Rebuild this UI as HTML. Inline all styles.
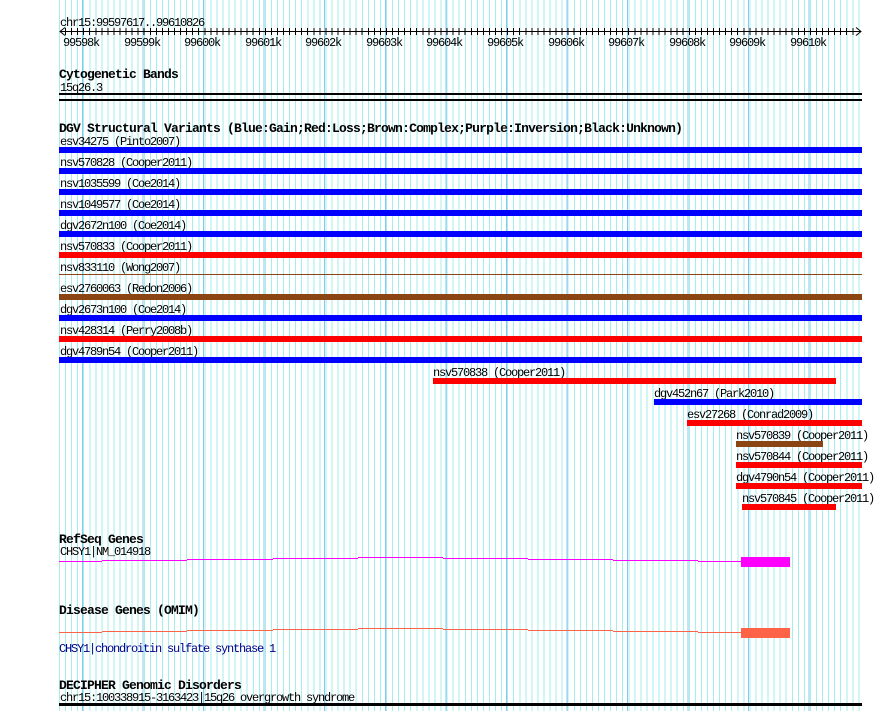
<!DOCTYPE html>
<html><head><meta charset="utf-8"><style>
html,body{margin:0;padding:0;background:#fff;}
body{width:890px;height:711px;position:relative;overflow:hidden;}
.grid{position:absolute;left:59px;top:0;width:803px;height:711px;
background-image:repeating-linear-gradient(to right,#a4eeee 0,#a4eeee 1px,transparent 1px,transparent 6.056px);}
.maj{position:absolute;left:23px;top:0;width:780px;height:711px;
background-image:repeating-linear-gradient(to right,#88c8ee 0,#88c8ee 1px,transparent 1px,transparent 60.56px);}
.t{position:absolute;font-family:"Liberation Mono",monospace;font-size:12px;line-height:12px;letter-spacing:-1.2px;color:#000;white-space:pre;}
.b{position:absolute;font-family:"Liberation Mono",monospace;font-size:13px;line-height:13px;font-weight:bold;letter-spacing:-0.8px;color:#000;white-space:pre;}
.r{position:absolute;}
</style></head><body>
<div class="grid"><div class="maj"></div></div>

<div class="t" style="left:60px;top:17px">chr15:99597617..99610826</div>
<svg class="r" style="left:0;top:0" width="890" height="40">
<line x1="60" y1="31.5" x2="861" y2="31.5" stroke="#000"/>
<polyline points="65,27.5 60,31.5 65,35.5" fill="none" stroke="#000"/>
<polyline points="856,27.5 861,31.5 856,35.5" fill="none" stroke="#000"/>
</svg>
<div class="r" style="left:65px;top:28px;width:792px;height:7px;background-image:repeating-linear-gradient(to right,#000 0,#000 1px,transparent 1px,transparent 6.056px);"></div>
<div class="t" style="left:63px;top:37px">99598k</div>
<div class="t" style="left:124px;top:37px">99599k</div>
<div class="t" style="left:184px;top:37px">99600k</div>
<div class="t" style="left:245px;top:37px">99601k</div>
<div class="t" style="left:305px;top:37px">99602k</div>
<div class="t" style="left:366px;top:37px">99603k</div>
<div class="t" style="left:426px;top:37px">99604k</div>
<div class="t" style="left:487px;top:37px">99605k</div>
<div class="t" style="left:548px;top:37px">99606k</div>
<div class="t" style="left:608px;top:37px">99607k</div>
<div class="t" style="left:669px;top:37px">99608k</div>
<div class="t" style="left:729px;top:37px">99609k</div>
<div class="t" style="left:790px;top:37px">99610k</div>

<div class="b" style="left:59px;top:68px">Cytogenetic Bands</div>
<div class="t" style="left:60px;top:82px">15q26.3</div>
<div class="r" style="left:59px;top:93px;width:803px;height:2px;background:#000"></div>
<div class="r" style="left:59px;top:99px;width:803px;height:2px;background:#000"></div>

<div class="b" style="left:59px;top:122px">DGV Structural Variants (Blue:Gain;Red:Loss;Brown:Complex;Purple:Inversion;Black:Unknown)</div>

<div class="t" style="left:60px;top:136px">esv34275 (Pinto2007)</div>
<div class="r" style="left:59px;top:147px;width:803px;height:6px;background:#0000ff"></div>
<div class="t" style="left:60px;top:157px">nsv570828 (Cooper2011)</div>
<div class="r" style="left:59px;top:168px;width:803px;height:6px;background:#0000ff"></div>
<div class="t" style="left:60px;top:178px">nsv1035599 (Coe2014)</div>
<div class="r" style="left:59px;top:189px;width:803px;height:6px;background:#0000ff"></div>
<div class="t" style="left:60px;top:199px">nsv1049577 (Coe2014)</div>
<div class="r" style="left:59px;top:210px;width:803px;height:6px;background:#0000ff"></div>
<div class="t" style="left:60px;top:220px">dgv2672n100 (Coe2014)</div>
<div class="r" style="left:59px;top:231px;width:803px;height:6px;background:#0000ff"></div>
<div class="t" style="left:60px;top:241px">nsv570833 (Cooper2011)</div>
<div class="r" style="left:59px;top:252px;width:803px;height:6px;background:#ff0000"></div>
<div class="t" style="left:60px;top:262px">nsv833110 (Wong2007)</div>
<div class="r" style="left:59px;top:274px;width:803px;height:1px;background:#8b4513"></div>
<div class="t" style="left:60px;top:283px">esv2760063 (Redon2006)</div>
<div class="r" style="left:59px;top:294px;width:803px;height:6px;background:#8b4513"></div>
<div class="t" style="left:60px;top:304px">dgv2673n100 (Coe2014)</div>
<div class="r" style="left:59px;top:315px;width:803px;height:6px;background:#0000ff"></div>
<div class="t" style="left:60px;top:325px">nsv428314 (Perry2008b)</div>
<div class="r" style="left:59px;top:336px;width:803px;height:6px;background:#ff0000"></div>
<div class="t" style="left:60px;top:346px">dgv4789n54 (Cooper2011)</div>
<div class="r" style="left:59px;top:357px;width:803px;height:6px;background:#0000ff"></div>

<div class="t" style="left:433px;top:367px">nsv570838 (Cooper2011)</div>
<div class="r" style="left:433px;top:378px;width:403px;height:6px;background:#ff0000"></div>
<div class="t" style="left:654px;top:388px">dgv452n67 (Park2010)</div>
<div class="r" style="left:654px;top:399px;width:208px;height:6px;background:#0000ff"></div>
<div class="t" style="left:687px;top:409px">esv27268 (Conrad2009)</div>
<div class="r" style="left:687px;top:420px;width:175px;height:6px;background:#ff0000"></div>
<div class="t" style="left:736px;top:430px">nsv570839 (Cooper2011)</div>
<div class="r" style="left:736px;top:441px;width:87px;height:6px;background:#8b4513"></div>
<div class="t" style="left:736px;top:451px">nsv570844 (Cooper2011)</div>
<div class="r" style="left:736px;top:462px;width:126px;height:6px;background:#ff0000"></div>
<div class="t" style="left:736px;top:472px">dgv4790n54 (Cooper2011)</div>
<div class="r" style="left:736px;top:483px;width:126px;height:6px;background:#ff0000"></div>
<div class="t" style="left:742px;top:493px">nsv570845 (Cooper2011)</div>
<div class="r" style="left:742px;top:504px;width:94px;height:6px;background:#ff0000"></div>

<div class="b" style="left:59px;top:533px">RefSeq Genes</div>
<div class="t" style="left:60px;top:546px">CHSY1|NM_014918</div>
<svg class="r" style="left:0;top:540px" width="890" height="110">
<g stroke="#ff00ff" stroke-width="1">
<line x1="59" y1="21.5" x2="102" y2="21.5"/>
<line x1="102" y1="20.5" x2="187" y2="20.5"/>
<line x1="187" y1="19.5" x2="273" y2="19.5"/>
<line x1="273" y1="18.5" x2="358" y2="18.5"/>
<line x1="358" y1="17.5" x2="443" y2="17.5"/>
<line x1="443" y1="18.5" x2="528" y2="18.5"/>
<line x1="528" y1="19.5" x2="613" y2="19.5"/>
<line x1="613" y1="20.5" x2="698" y2="20.5"/>
<line x1="698" y1="21.5" x2="741" y2="21.5"/>
</g>
<rect x="741" y="17" width="49" height="10" fill="#ff00ff"/>
<g stroke="#ff6347" stroke-width="1">
<line x1="59" y1="92.5" x2="102" y2="92.5"/>
<line x1="102" y1="91.5" x2="187" y2="91.5"/>
<line x1="187" y1="90.5" x2="273" y2="90.5"/>
<line x1="273" y1="89.5" x2="358" y2="89.5"/>
<line x1="358" y1="88.5" x2="443" y2="88.5"/>
<line x1="443" y1="89.5" x2="528" y2="89.5"/>
<line x1="528" y1="90.5" x2="613" y2="90.5"/>
<line x1="613" y1="91.5" x2="698" y2="91.5"/>
<line x1="698" y1="92.5" x2="741" y2="92.5"/>
</g>
<rect x="741" y="88" width="49" height="10" fill="#ff6347"/>
</svg>

<div class="b" style="left:59px;top:604px">Disease Genes (OMIM)</div>
<div class="t" style="left:59px;top:643px;color:#00008b">CHSY1|chondroitin sulfate synthase 1</div>

<div class="b" style="left:59px;top:679px">DECIPHER Genomic Disorders</div>
<div class="t" style="left:60px;top:692px">chr15:100338915-3163423|15q26 overgrowth syndrome</div>
<div class="r" style="left:59px;top:703px;width:803px;height:3px;background:#000"></div>
</body></html>
